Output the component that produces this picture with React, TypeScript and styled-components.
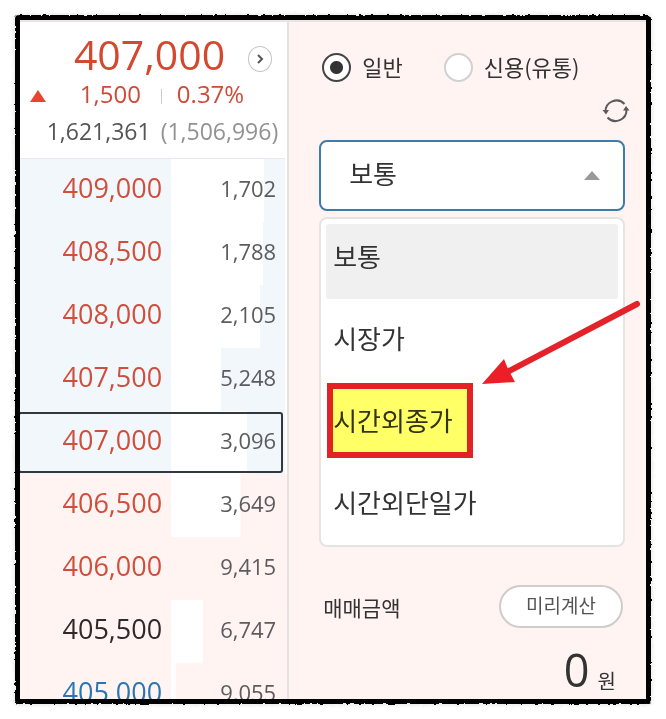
import React, { useState } from "react";
import styled, { createGlobalStyle, css } from "styled-components";

const hangul = `"Noto Sans CJK KR", "Noto Sans CJK SC", sans-serif`;

const GlobalStyle = createGlobalStyle`
  *, *::before, *::after { box-sizing: border-box; }
  body {
    margin: 0;
    background: #fff;
    font-family: "Open Sans", ${hangul};
    color: #333;
  }
  button, select, input { font: inherit; color: inherit; margin: 0; }
`;

const Page = styled.main`
  height: 100vh;
  padding: 15px;
`;

const Frame = styled.div`
  position: relative;
  height: 100%;
  padding: 5px;
  &::before {
    content: "";
    position: absolute;
    inset: 0;
    border-radius: 4px;
    background: #000;
    box-shadow: 0 0 3px 2px #eee;
    filter: url(#rough-edge);
  }
`;

const FilterDefs = styled.svg`
  position: absolute;
  width: 0;
  height: 0;
`;

const Screen = styled.div`
  position: relative;
  display: grid;
  grid-template-columns: 43fr 57fr;
  height: 100%;
  overflow: hidden;
  background: #fff4f2;
  border-top: 2px solid #e9e5e5;
`;

const Book = styled.section`
  min-width: 0;
  background: #fff;
  border-right: 2px solid #e4e2e2;
`;

const Summary = styled.header`
  height: 136px;
  padding: 8px 9px 0 10px;
`;

const PriceLine = styled.div`
  display: flex;
  align-items: center;
  justify-content: flex-end;
  gap: 23px;
  height: 48px;
  padding-right: 6px;
`;

const LastPrice = styled.strong`
  font-size: 41px;
  font-weight: 400;
  line-height: 48px;
  color: #d2492f;
`;

const RoundButton = styled.button`
  display: grid;
  place-items: center;
  width: 24px;
  height: 26px;
  padding: 0;
  margin-top: 9px;
  border: 1px solid #c4c4c4;
  border-radius: 50%;
  background: #fff;
`;

const ChangeLine = styled.div`
  display: flex;
  align-items: center;
  height: 32px;
  padding-right: 34px;
  font-size: 24px;
  line-height: 32px;
  color: #cf4a38;
`;

const RiseMark = styled.svg`
  margin-top: 4px;
`;

const Rate = styled.span`
  margin-left: 15px;
`;

const Divider = styled.i`
  width: 1px;
  height: 15px;
  margin: 4px 0 0 20px;
  background: #ccc;
`;

const Change = styled.span`
  margin-left: auto;
`;

const VolumeLine = styled.div`
  display: flex;
  justify-content: flex-end;
  gap: 10px;
  font-size: 23px;
  line-height: 42px;
  color: #555;
  white-space: nowrap;
`;

const PriorVolume = styled.span`
  color: #929292;
`;

const LadderArea = styled.div`
  padding-right: 2px;
  background: linear-gradient(#fff 0 316px, #fff4f2 316px);
`;

const Ladder = styled.table`
  width: 100%;
  table-layout: fixed;
  border-collapse: collapse;
  border-top: 1px solid #e6eaec;
`;

type Side = "ask" | "bid";

const tones = { up: "#cf4e3c", flat: "#2e2a2a", down: "#2a76b3" };
type Tone = keyof typeof tones;

const PriceCell = styled.td<{ $tone: Tone }>`
  width: 57%;
  padding: 0 9px 5px 0;
  text-align: right;
  font-size: 27px;
  line-height: 36px;
  color: ${(p) => tones[p.$tone]};
`;

const QuantityCell = styled.td<{ $share: number }>`
  padding: 0 9px 5px 0;
  text-align: right;
  font-size: 22px;
  line-height: 36px;
  color: #5c5c5e;
  background: linear-gradient(#fff, #fff) left / ${(p) => p.$share}% 100% no-repeat;
`;

const LadderRow = styled.tr<{ $side: Side; $current?: boolean }>`
  position: relative;
  height: 63px;
  background: ${(p) => (p.$side === "ask" ? "#f2f7fc" : "#fff4f2")};
  ${(p) =>
    p.$current &&
    css`
      ${PriceCell}::after {
        content: "";
        position: absolute;
        inset: 1px 2px 1px -2px;
        border: 2px solid #33383c;
        border-radius: 3px;
      }
    `}
`;

const Order = styled.section`
  min-width: 0;
  padding: 27px 21px 0 30px;
`;

const RadioRow = styled.div`
  display: flex;
  gap: 41px;
  padding-left: 3px;
`;

const RadioLabel = styled.label`
  display: flex;
  align-items: center;
  gap: 11px;
  height: 36px;
  font-family: ${hangul};
  font-size: 22px;
  line-height: 32px;
  white-space: nowrap;
`;

const RadioText = styled.span`
  padding-bottom: 2px;
`;

const Radio = styled.input`
  appearance: none;
  flex: none;
  width: 29px;
  height: 29px;
  border: 2px solid #d2d0d0;
  border-radius: 50%;
  background: #fff;
  &:checked {
    border-color: #444;
    background: radial-gradient(circle, #333 6px, #fff 7px);
  }
`;

const Tools = styled.div`
  display: flex;
  justify-content: flex-end;
  height: 55px;
  padding: 12px 0 0;
`;

const IconButton = styled.button`
  width: 28px;
  height: 28px;
  padding: 0;
  margin-right: -5px;
  border: 0;
  background: none;
`;

const SelectBox = styled.div`
  display: grid;
  align-items: center;
  > * { grid-area: 1 / 1; }
  > svg {
    justify-self: end;
    margin-right: 25px;
    pointer-events: none;
  }
`;

const Select = styled.select`
  appearance: none;
  width: 100%;
  height: 71px;
  padding: 0 48px 4px 28px;
  border: 2px solid #3c7cab;
  border-radius: 8px;
  background: #fff;
  font-size: 26px;
  outline: 0;
`;

const Menu = styled.div`
  position: relative;
  display: grid;
  gap: 7px;
  margin-top: 6px;
  padding: 5px 5px 0;
  border: 2px solid #e6e3e3;
  border-radius: 8px;
  background: #fff;
`;

const Option = styled.button<{ $marked?: boolean }>`
  position: relative;
  height: 75px;
  padding: 0 7px 10px;
  border: 0;
  border-radius: 3px;
  background: none;
  text-align: left;
  font-size: 26px;
  line-height: 36px;
  &[aria-selected="true"] { background: #f0f0f0; }
  ${(p) =>
    p.$marked &&
    css`
      &::after {
        content: "";
        position: absolute;
        top: -5px;
        left: 1px;
        width: 146px;
        height: 75px;
        border: 6px solid #e32226;
        background: #ffff66;
        mix-blend-mode: multiply;
      }
    `}
`;

const Arrow = styled.svg`
  position: absolute;
  top: 80px;
  left: 158px;
  pointer-events: none;
`;

const AmountRow = styled.div`
  display: flex;
  align-items: center;
  justify-content: space-between;
  margin-top: 38px;
  padding: 0 2px 0 4px;
  font-size: 21px;
`;

const PillButton = styled.button`
  width: 124px;
  height: 43px;
  padding: 0 0 4px;
  border: 2px solid #cfcccc;
  border-radius: 22px;
  background: #fff;
  font-size: 19px;
  color: #555;
`;

const Total = styled.div`
  display: flex;
  align-items: flex-start;
  justify-content: flex-end;
  gap: 8px;
  margin-top: 12px;
  padding-right: 9px;
`;

const TotalValue = styled.output`
  font-size: 45px;
  line-height: 60px;
`;

const Unit = styled.span`
  font-size: 20px;
  line-height: 84px;
`;

const ladder: { price: string; qty: string; side: Side; tone: Tone; share: number; current?: boolean }[] = [
  { price: "409,000", qty: "1,702", side: "ask", tone: "up", share: 82 },
  { price: "408,500", qty: "1,788", side: "ask", tone: "up", share: 81 },
  { price: "408,000", qty: "2,105", side: "ask", tone: "up", share: 78 },
  { price: "407,500", qty: "5,248", side: "ask", tone: "up", share: 44 },
  { price: "407,000", qty: "3,096", side: "ask", tone: "up", share: 67, current: true },
  { price: "406,500", qty: "3,649", side: "bid", tone: "up", share: 61 },
  { price: "406,000", qty: "9,415", side: "bid", tone: "up", share: 0 },
  { price: "405,500", qty: "6,747", side: "bid", tone: "flat", share: 28 },
  { price: "405,000", qty: "9,055", side: "bid", tone: "down", share: 4 },
];

const orderTypes = ["보통", "시장가", "시간외종가", "시간외단일가"];

export default function App() {
  const [credit, setCredit] = useState(false);
  const [type, setType] = useState(orderTypes[0]);

  return (
    <Page>
      <GlobalStyle />
      <FilterDefs aria-hidden="true">
        <filter id="rough-edge" x="-2%" y="-2%" width="104%" height="104%">
          <feTurbulence type="fractalNoise" baseFrequency="0.25" numOctaves="2" seed="4" />
          <feDisplacementMap in="SourceGraphic" scale="3" xChannelSelector="R" yChannelSelector="G" />
        </filter>
      </FilterDefs>
      <Frame>
        <Screen>
          <Book>
            <Summary>
              <PriceLine>
                <LastPrice>407,000</LastPrice>
                <RoundButton aria-label="상세">
                  <svg width="8" height="10" viewBox="0 0 8 10" fill="none" stroke="#555" strokeWidth="2">
                    <path d="M2 1l4 4-4 4" />
                  </svg>
                </RoundButton>
              </PriceLine>
              <ChangeLine>
                <RiseMark width="16" height="12" viewBox="0 0 16 12">
                  <path d="M8 0l8 12H0z" fill="#e8452c" />
                </RiseMark>
                <Change>1,500</Change>
                <Divider />
                <Rate>0.37%</Rate>
              </ChangeLine>
              <VolumeLine>
                <span>1,621,361</span>
                <PriorVolume>(1,506,996)</PriorVolume>
              </VolumeLine>
            </Summary>
            <LadderArea>
              <Ladder>
                <tbody>
                  {ladder.map((row) => (
                    <LadderRow key={row.price} $side={row.side} $current={row.current}>
                      <PriceCell $tone={row.tone}>{row.price}</PriceCell>
                      <QuantityCell $share={row.share}>{row.qty}</QuantityCell>
                    </LadderRow>
                  ))}
                </tbody>
              </Ladder>
            </LadderArea>
          </Book>
          <Order>
            <RadioRow>
              <RadioLabel>
                <Radio type="radio" name="kind" checked={!credit} onChange={() => setCredit(false)} />
                <RadioText>일반</RadioText>
              </RadioLabel>
              <RadioLabel>
                <Radio type="radio" name="kind" checked={credit} onChange={() => setCredit(true)} />
                <RadioText>신용(유통)</RadioText>
              </RadioLabel>
            </RadioRow>
            <Tools>
              <IconButton aria-label="새로고침">
                <svg width="28" height="28" viewBox="0 0 28 28" fill="none" stroke="#5d5a5a" strokeWidth="2">
                  <path d="M22.5 7A11 11 0 0 0 3.5 15" />
                  <path d="M5.5 20.5A11 11 0 0 0 24.5 12.5" />
                  <path d="M0.5 13h6.500l-3 4.500z M21 13.500h6.500l-3.500-4.500z" fill="#5d5a5a" stroke="none" />
                </svg>
              </IconButton>
            </Tools>
            <SelectBox>
              <Select aria-label="주문 유형" value={type} onChange={(e) => setType(e.target.value)}>
                {orderTypes.map((name) => (
                  <option key={name}>{name}</option>
                ))}
              </Select>
              <svg width="16" height="9" viewBox="0 0 16 9">
                <path d="M8 0l8 9H0z" fill="#999" />
              </svg>
            </SelectBox>
            <Menu role="listbox" aria-label="주문 유형 목록">
              {orderTypes.map((name) => (
                <Option
                  key={name}
                  role="option"
                  aria-selected={name === type}
                  $marked={name === "시간외종가"}
                  onClick={() => setType(name)}
                >
                  {name}
                </Option>
              ))}
              <Arrow width="166" height="92" viewBox="0 0 166 92" aria-hidden="true">
                <path d="M30 72L158 5" stroke="#e32229" strokeWidth="6" strokeLinecap="round" />
                <path d="M3 85L25 60L29 70L36 83z" fill="#ec1f26" />
              </Arrow>
            </Menu>
            <AmountRow>
              <span>매매금액</span>
              <PillButton>미리계산</PillButton>
            </AmountRow>
            <Total>
              <TotalValue>0</TotalValue>
              <Unit>원</Unit>
            </Total>
          </Order>
        </Screen>
      </Frame>
    </Page>
  );
}
